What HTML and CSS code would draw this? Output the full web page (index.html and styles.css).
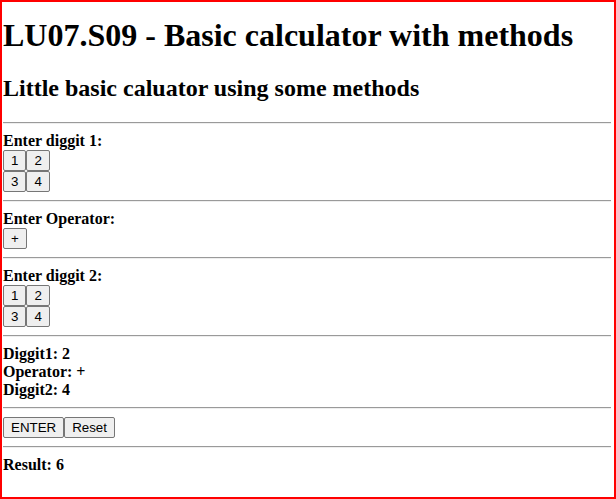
FILE: index.html
```html
<!DOCTYPE html>
<html>
<head>
<meta charset="utf-8">
<title>LU07.S09 - Basic calculator with methods</title>
<link rel="stylesheet" href="styles.css">
</head>
<body>
<div class="frame">
<h1 class="title">LU07.S09 - Basic calculator with methods</h1>
<h2 class="subtitle">Little basic caluator using some methods</h2>
<hr class="rule">
<b class="label">Enter diggit 1:</b><br>
<button class="btn">1</button><button class="btn">2</button><br>
<button class="btn">3</button><button class="btn">4</button>
<hr class="rule">
<b class="label">Enter Operator:</b><br>
<button class="btn">+</button>
<hr class="rule">
<b class="label">Enter diggit 2:</b><br>
<button class="btn">1</button><button class="btn">2</button><br>
<button class="btn">3</button><button class="btn">4</button>
<hr class="rule">
<b class="label">Diggit1: 2</b><br>
<b class="label">Operator: +</b><br>
<b class="label">Diggit2: 4</b>
<hr class="rule">
<button class="btn">ENTER</button><button class="btn">Reset</button>
<hr class="rule">
<b class="label">Result: 6</b>
</div>
</body>
</html>
```
FILE: styles.css
```css
html, body {
  margin: 0;
  padding: 0;
  background: #fff;
}
body {
  font-family: "Liberation Serif", "Times New Roman", serif;
  font-size: 16px;
  color: #000;
}
.frame {
  box-sizing: border-box;
  height: 499px;
  width: 616px;
  border: 2px solid #ff0000;
  padding: 0 3px 0 1px;
  overflow: hidden;
}
.title {
  font-size: 32px;
  font-weight: bold;
  margin: 14.5px 0 21.44px 0;
}
.subtitle {
  font-size: 24px;
  font-weight: bold;
  margin: 19.92px 0 19.92px 0;
}
.rule {
  margin: 8px 0;
  border: none;
  border-top: 1px solid #9a9a9a;
  border-bottom: 1px solid #eeeeee;
  height: 0;
}
.label {
  font-weight: bold;
}
.btn {
  font-family: "Liberation Sans", Arial, sans-serif;
  font-size: 13.333px;
  line-height: 15px;
  padding: 2px 7px;
  margin: 0;
  border: 1px solid #767676;
  border-radius: 2px;
  background: #efefef;
  color: #000;
}
```
